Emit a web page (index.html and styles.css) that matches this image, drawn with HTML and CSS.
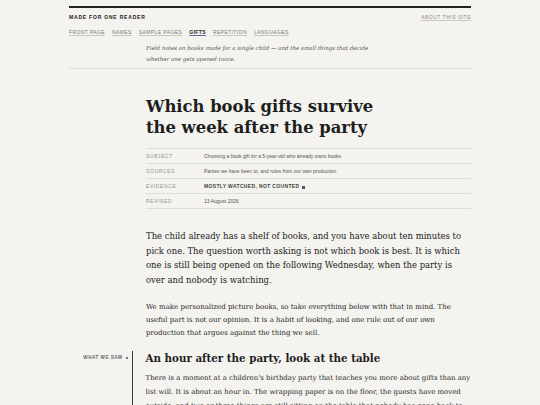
FILE: index.html
```html
<!DOCTYPE html>
<html lang="en">
<head>
    <meta charset="UTF-8">
    <title>Which book gifts survive the week after the party</title>
    <link rel="stylesheet" href="styles.css">
</head>
<body>
<div class="page">
    <header class="masthead">
        <div class="masthead__top">
            <a class="masthead__brand" href="#">Made for one reader</a>
            <a class="masthead__about" href="#">About this site</a>
        </div>
        <nav class="nav">
            <a class="nav__link" href="#">Front page</a>
            <a class="nav__link" href="#">Names</a>
            <a class="nav__link" href="#">Sample pages</a>
            <a class="nav__link nav__link--active" href="#">Gifts</a>
            <a class="nav__link" href="#">Repetition</a>
            <a class="nav__link" href="#">Languages</a>
        </nav>
        <p class="masthead__intro">Field notes on books made for a single child &mdash; and the small things that decide whether one gets opened twice.</p>
    </header>

    <article class="article">
        <h1 class="article__title">Which book gifts survive the week after the party</h1>

        <dl class="meta">
            <div class="meta__row">
                <dt class="meta__label">Subject</dt>
                <dd class="meta__value">Choosing a book gift for a 5-year-old who already owns books</dd>
            </div>
            <div class="meta__row">
                <dt class="meta__label">Sources</dt>
                <dd class="meta__value">Parties we have been to, and rules from our own production</dd>
            </div>
            <div class="meta__row">
                <dt class="meta__label">Evidence</dt>
                <dd class="meta__value meta__value--strong">Mostly watched, not counted <span class="mark"></span></dd>
            </div>
            <div class="meta__row">
                <dt class="meta__label">Revised</dt>
                <dd class="meta__value">13 August 2026</dd>
            </div>
        </dl>

        <p class="article__lead">The child already has a shelf of books, and you have about ten minutes to pick one. The question worth asking is not which book is best. It is which one is still being opened on the following Wednesday, when the party is over and nobody is watching.</p>

        <p class="article__text">We make personalized picture books, so take everything below with that in mind. The useful part is not our opinion. It is a habit of looking, and one rule out of our own production that argues against the thing we sell.</p>

        <section class="section">
            <div class="section__label">What we saw <span class="mark"></span></div>
            <div class="section__body">
                <h2 class="section__heading">An hour after the party, look at the table</h2>
                <p class="article__text">There is a moment at a children&rsquo;s birthday party that teaches you more about gifts than any list will. It is about an hour in. The wrapping paper is on the floor, the guests have moved outside, and two or three things are still sitting on the table that nobody has gone back to. Those are worth a long look.</p>
            </div>
        </section>
    </article>
</div>
</body>
</html>
```

FILE: styles.css
```css
* {
    box-sizing: border-box;
}
html, body {
    margin: 0;
    padding: 0;
}
body {
    background-color: #f4f3ef;
    color: #222;
    font-family: Georgia, "DejaVu Serif", serif;
}
a {
    color: inherit;
}
.page {
    width: 402px;
    margin: 0 auto;
    padding-top: 6px;
}
.masthead {
    border-top: 2px solid #222;
    border-bottom: 1px solid #dedcd6;
    padding-bottom: 4px;
}
.masthead__top {
    display: flex;
    justify-content: space-between;
    align-items: center;
    padding-top: 6px;
    font-family: "Liberation Sans", Arial, sans-serif;
    font-size: 5px;
    line-height: 6px;
    text-transform: uppercase;
}
.masthead__brand {
    font-weight: 700;
    letter-spacing: .8px;
    color: #1c1c1c;
    text-decoration: none;
}
.masthead__about {
    letter-spacing: .5px;
    color: #8a8a8a;
    text-decoration: underline;
    text-decoration-color: #c9c7c1;
}
.nav {
    display: flex;
    gap: 7px;
    margin-top: 9px;
    font-family: "Liberation Sans", Arial, sans-serif;
    font-size: 5px;
    line-height: 6px;
    text-transform: uppercase;
}
.nav__link {
    letter-spacing: .4px;
    color: #7a7a7a;
    text-decoration: underline;
    text-decoration-color: #c9c7c1;
    text-underline-offset: 1px;
}
.nav__link--active {
    font-weight: 700;
    color: #1c1c1c;
    text-decoration-color: #5b6994;
    text-decoration-thickness: 1.3px;
}
.masthead__intro {
    margin: 8px 0 0 77px;
    max-width: 240px;
    font-size: 5.5px;
    line-height: 10.7px;
    font-style: italic;
    color: #555;
}
.article {
    padding-left: 77px;
}
.article__title {
    max-width: 250px;
    margin: 27px 0 10px;
    font-size: 16.4px;
    line-height: 21px;
    font-weight: 700;
    color: #1e1e1e;
}
.meta {
    margin: 0;
    border-top: 1px solid #dedcd6;
    font-family: "Liberation Sans", Arial, sans-serif;
    font-size: 5px;
}
.meta__row {
    display: flex;
    align-items: center;
    height: 15px;
    border-bottom: 1px solid #dedcd6;
}
.meta__label {
    width: 58px;
    letter-spacing: .6px;
    text-transform: uppercase;
    color: #939393;
}
.meta__value {
    margin: 0;
    color: #555;
}
.meta__value--strong {
    font-weight: 700;
    letter-spacing: .35px;
    text-transform: uppercase;
    color: #444;
}
.mark {
    display: inline-block;
    width: 3px;
    height: 3px;
    margin-left: 1px;
    background-color: #555;
    vertical-align: middle;
}
.article__lead {
    margin: 20px 0 0;
    font-size: 8.45px;
    line-height: 14.5px;
    color: #222;
}
.article__text {
    margin: 14px 0 0;
    font-size: 7px;
    line-height: 13px;
    color: #262626;
}
.section {
    display: grid;
    grid-template-columns: 63px 1fr;
    margin: 11px 0 0 -77px;
}
.section__label {
    padding: 4px 4px 0 0;
    text-align: right;
    font-family: "Liberation Sans", Arial, sans-serif;
    font-size: 4.6px;
    line-height: 6px;
    font-weight: 700;
    letter-spacing: .5px;
    text-transform: uppercase;
    color: #666;
}
.section__label .mark {
    width: 2.5px;
    height: 2.5px;
    background-color: #777;
}
.section__body {
    border-left: 1.5px solid #3a3a3a;
    padding-left: 12.5px;
}
.section__heading {
    margin: 0;
    font-size: 10.3px;
    line-height: 14px;
    font-weight: 700;
    color: #1e1e1e;
}
.section__body .article__text {
    margin-top: 7px;
    font-size: 6.95px;
    line-height: 13.7px;
}
```
